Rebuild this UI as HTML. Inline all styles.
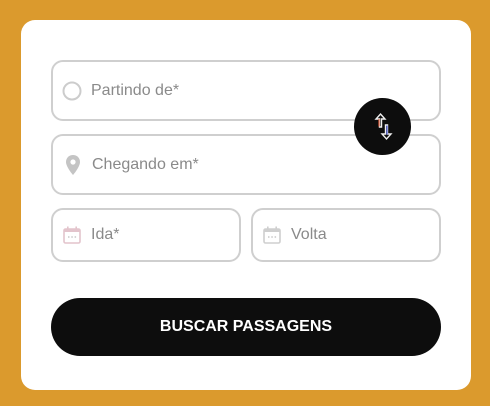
<!DOCTYPE html><html><head><style>
body{margin:0;width:490px;height:406px;background:#DB9A2D;font-family:"Liberation Sans",sans-serif;position:relative;overflow:hidden}
.card{position:absolute;left:21px;top:20px;width:450px;height:370px;background:#fff;border-radius:14px}
.in{position:absolute;border:2px solid #cfcfcf;border-radius:12px;box-sizing:border-box;color:#8a8a8a;font-size:16px}
.in span{position:absolute;top:50%;transform:translateY(-50%)}
.in svg{position:absolute;top:50%;transform:translateY(-50%)}
.btn{position:absolute;left:51px;top:298px;width:390px;height:58px;background:#0d0d0d;border-radius:29px;color:#fff;font-weight:bold;font-size:16px;text-align:center;line-height:58px}
.sw{position:absolute;left:354px;top:98px;width:57px;height:57px;border-radius:50%;background:#0d0d0d}
</style></head><body>
<div class="card"></div>
<div class="in" style="left:51px;top:60px;width:390px;height:61px"><svg style="left:9px" width="20" height="20"><circle cx="10" cy="10" r="8.5" fill="none" stroke="#ccc" stroke-width="2"/></svg><span style="left:38px">Partindo de*</span></div>
<div class="in" style="left:51px;top:134px;width:390px;height:61px"><svg style="left:12px" width="16" height="22" viewBox="0 0 16 22"><path d="M8 1C4 1 1 4 1 8c0 5 7 13 7 13s7-8 7-13c0-4-3-7-7-7z" fill="#c4c4c4"/><circle cx="8" cy="8" r="2.6" fill="#fff"/></svg><span style="left:39px">Chegando em*</span></div>
<div class="in" style="left:51px;top:208px;width:190px;height:54px"><svg style="left:10px" width="18" height="18" viewBox="0 0 18 18"><rect x="1" y="3" width="16" height="14" rx="1.5" fill="none" stroke="#e3c4cc" stroke-width="1.6"/><rect x="1" y="3" width="16" height="3" fill="#e3c4cc"/><rect x="4" y="0.5" width="1.6" height="3.5" fill="#e3c4cc"/><rect x="12.4" y="0.5" width="1.6" height="3.5" fill="#e3c4cc"/><path d="M5 11h1.5M8.3 11h1.5M11.6 11h1.5" stroke="#c9c9c9" stroke-width="1.4"/></svg><span style="left:38px">Ida*</span></div>
<div class="in" style="left:251px;top:208px;width:190px;height:54px"><svg style="left:10px" width="18" height="18" viewBox="0 0 18 18"><rect x="1" y="3" width="16" height="14" rx="1.5" fill="none" stroke="#cfcfcf" stroke-width="1.6"/><rect x="1" y="3" width="16" height="3" fill="#cfcfcf"/><rect x="4" y="0.5" width="1.6" height="3.5" fill="#cfcfcf"/><rect x="12.4" y="0.5" width="1.6" height="3.5" fill="#cfcfcf"/><path d="M5 11h1.5M8.3 11h1.5M11.6 11h1.5" stroke="#c9c9c9" stroke-width="1.4"/></svg><span style="left:38px">Volta</span></div>
<div class="sw"><svg width="57" height="57" viewBox="0 0 57 57"><path d="M25.5 29V21h-3.5l4.5-5 4.5 5h-3.5v8z" fill="none" stroke="#f0f0f0" stroke-width="1.4"/><path d="M25 28.5V21" stroke="#e06040" stroke-width="1.2"/><path d="M31.5 27v9H28l4.5 5 4.5-5h-3.5v-9z" fill="none" stroke="#f0f0f0" stroke-width="1.4"/><path d="M33 27.5v9" stroke="#5060e0" stroke-width="1.2"/></svg></div>
<div class="btn">BUSCAR PASSAGENS</div>
</body></html>
